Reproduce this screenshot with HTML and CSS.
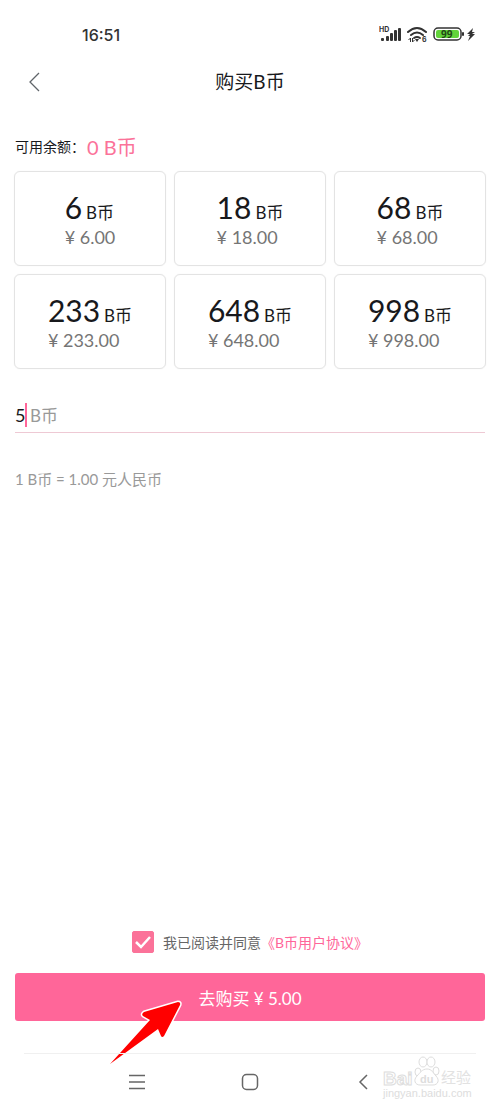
FILE: index.html
```html
<!DOCTYPE html>
<html lang="zh-CN">
<head>
<meta charset="UTF-8" />
<meta name="viewport" content="width=device-width, initial-scale=1" />
<title>购买B币</title>
<link rel="stylesheet" href="styles.css">
</head>
<body>
  <div class="status-bar">
    <span class="time">16:51</span>
    <svg class="status-icons" width="98" height="20" viewBox="0 0 98 20">
      <!-- signal -->
      <text x="0" y="7" class="tiny">HD</text>
      <g fill="#333">
        <rect x="2" y="13" width="3" height="3" rx="1" />
        <rect x="7" y="11" width="3" height="5" rx="1" />
        <rect x="11" y="8" width="3" height="8" rx="1" />
        <rect x="15" y="5" width="3" height="11" rx="1" />
        <rect x="19" y="3" width="3" height="13" rx="1" />
      </g>
      <!-- wifi -->
      <g fill="none" stroke="#333" stroke-width="2" stroke-linecap="round">
        <path d="M29 7Q38 -1 47 7" />
        <path d="M32 10Q38 5 44 10" />
        <path d="M35 13Q38 11 41 13" />
      </g>
      <path d="M36 14h4l-2 3z" fill="#333" />
      <path d="M31.500 17v-4l-2 2M33.500 13v4l2-2" fill="none" stroke="#333" />
      <text x="43" y="17" class="tiny">6</text>
      <!-- battery -->
      <rect x="55" y="3" width="27" height="12" rx="4" fill="#fff" stroke="#333" stroke-width="1.500" />
      <rect x="57" y="5" width="23" height="8" rx="2" fill="#62d43a" />
      <rect x="83" y="7" width="2" height="4" rx="1" fill="#333" />
      <text x="62" y="13" class="level">99</text>
      <path d="M94 3l-6 6h3l-2 2h2l-2 5 7-7h-3l3-2h-3z" fill="#333" />
    </svg>
  </div>

  <header class="header">
    <button type="button" class="back" aria-label="返回">
      <svg width="12" height="20" viewBox="0 0 12 20"><path d="M11 1L2 10l9 9" fill="none" stroke="#60656a" stroke-width="1.300" /></svg>
    </button>
    <h1>购买B币</h1>
  </header>

  <form class="content" id="buyForm">
    <p class="balance">可用余额：<strong>0 B币</strong></p>

    <div class="packages">
      <button type="button" class="package" data-amount="6"><span class="info"><span class="amount"><b>6</b><small>B币</small></span><span class="price">¥ 6.00</span></span></button>
      <button type="button" class="package" data-amount="18"><span class="info"><span class="amount"><b>18</b><small>B币</small></span><span class="price">¥ 18.00</span></span></button>
      <button type="button" class="package" data-amount="68"><span class="info"><span class="amount"><b>68</b><small>B币</small></span><span class="price">¥ 68.00</span></span></button>
      <button type="button" class="package" data-amount="233"><span class="info"><span class="amount"><b>233</b><small>B币</small></span><span class="price">¥ 233.00</span></span></button>
      <button type="button" class="package" data-amount="648"><span class="info"><span class="amount"><b>648</b><small>B币</small></span><span class="price">¥ 648.00</span></span></button>
      <button type="button" class="package" data-amount="998"><span class="info"><span class="amount"><b>998</b><small>B币</small></span><span class="price">¥ 998.00</span></span></button>
    </div>

    <div class="custom">
      <input type="text" id="amount" inputmode="numeric" value="5" aria-label="B币数量" />
      <span class="caret"></span>
      <label for="amount">B币</label>
    </div>
    <p class="rate">1 B币 = 1.00 元人民币</p>

    <div class="bottom">
      <div class="agree">
        <input type="checkbox" id="agree" checked />
        <label for="agree">我已阅读并同意</label><a href="#">《B币用户协议》</a>
      </div>
      <div class="submit-wrap">
        <button type="submit" class="submit">去购买 ¥ <span id="total">5.00</span></button>
        <svg class="arrow" width="74" height="66" viewBox="0 0 74 66">
          <path d="M20 43L41 21l-7-4q-2-2 1-4L69 3q3 0 2 3L55 37q-2 2-3 0l-3-7L31 42" fill="#fff" stroke="#fff" stroke-width="3" stroke-linejoin="round" />
          <path d="M1 65L41 21l-7-4q-2-2 1-4L69 3q3 0 2 3L55 37q-2 2-3 0l-3-7z" fill="#f00" />
        </svg>
      </div>
    </div>
  </form>

  <nav class="nav">
    <div class="nav-keys">
      <button type="button" aria-label="菜单"><svg width="18" height="18" viewBox="0 0 18 18"><path d="M1 2.500h16M1 9h16M1 15.500h16" /></svg></button>
      <button type="button" aria-label="主页"><svg width="18" height="18" viewBox="0 0 18 18"><rect x="1.500" y="1.500" width="15" height="15" rx="4" /></svg></button>
      <button type="button" aria-label="后退"><svg width="18" height="18" viewBox="0 0 18 18"><path d="M13 2L6 9l7 7" /></svg></button>
    </div>
    <svg class="watermark" width="92" height="46" viewBox="0 0 92 46">
      <g class="outline">
        <text x="1" y="29" class="brand">Bai</text>
        <ellipse cx="36" cy="16" rx="3" ry="4" />
        <ellipse cx="41" cy="6" rx="4" ry="5" />
        <ellipse cx="49" cy="6" rx="4" ry="5" />
        <ellipse cx="54" cy="15" rx="3" ry="4" />
        <path d="M45 13c5 0 6 4 9 7 4 4 2 9-3 9H38c-5 0-7-5-3-9 3-3 5-7 10-7z" />
        <text x="59" y="27" class="cn">经验</text>
      </g>
      <text x="38" y="27" class="du">du</text>
      <text x="1" y="41" class="site">jingyan.baidu.com</text>
    </svg>
  </nav>

<script>
  const amountInput = document.getElementById('amount');
  const total = document.getElementById('total');

  function updateTotal() {
    amountInput.style.width = amountInput.value.length > 1 ? amountInput.value.length + 'ch' : '';
    total.textContent = (Number(amountInput.value) || 0).toFixed(2);
  }

  document.querySelectorAll('.package').forEach(btn => {
    btn.addEventListener('click', () => {
      amountInput.value = btn.dataset.amount;
      updateTotal();
    });
  });

  amountInput.addEventListener('input', updateTotal);
  document.getElementById('buyForm').addEventListener('submit', e => e.preventDefault());
</script>
</body>
</html>
```

FILE: styles.css
```css
* {
  box-sizing: border-box;
}
body {
  margin: 0;
  min-height: 100vh;
  display: flex;
  flex-direction: column;
  background: #fff;
  color: #18191c;
  font-family: Lato, "Noto Sans CJK SC", sans-serif;
}
button, input {
  font-family: inherit;
  color: inherit;
  border: none;
  background: none;
  padding: 0;
  margin: 0;
}
button {
  cursor: pointer;
}
p, h1 {
  margin: 0;
}
a {
  color: #ff6699;
  text-decoration: none;
}

/* Status bar */
.status-bar {
  display: flex;
  justify-content: space-between;
  align-items: center;
  height: 58px;
  padding: 12px 23px 0 82px;
}
.time {
  font: 500 16px/24px Inter, sans-serif;
  color: #333;
}
.tiny {
  font: bold 7px Inter, sans-serif;
  fill: #333;
}
.level {
  font: bold 10px "Open Sans", sans-serif;
  fill: #234816;
}

/* Header */
.header {
  position: relative;
  height: 48px;
  display: flex;
  align-items: center;
  justify-content: center;
}
.back {
  position: absolute;
  left: 16px;
  width: 36px;
  height: 36px;
}
.back svg {
  display: block;
  margin: auto;
}
h1 {
  font-size: 19px;
  line-height: 26px;
  font-weight: 400;
}

/* Content */
.content {
  flex: 1;
  display: flex;
  flex-direction: column;
}
.balance {
  display: flex;
  align-items: center;
  gap: 2px;
  height: 24px;
  margin: 28px 15px 13px;
  font-size: 14px;
}
.balance strong {
  font-size: 20px;
  font-weight: 400;
  color: #fb7299;
}
.packages {
  display: grid;
  grid-template-columns: repeat(3, 1fr);
  gap: 8px;
  padding: 0 14px;
}
.package {
  height: 95px;
  border: 1px solid #e3e3e3;
  border-radius: 6px;
  box-shadow: 0 0 1px #e3e3e3;
}
.info {
  display: inline-block;
  text-align: left;
}
.amount {
  display: flex;
  align-items: baseline;
  gap: 4px;
  height: 36px;
  line-height: 36px;
}
.amount b {
  font-size: 30px;
  font-weight: 400;
}
.amount small {
  font-size: 17px;
}
.price {
  display: block;
  font-size: 18px;
  line-height: 24px;
  color: #757575;
}
.custom {
  display: flex;
  align-items: center;
  height: 36px;
  margin: 28px 15px 0;
  border-bottom: 1px solid #eec9d4;
  font-size: 17px;
  color: #999;
}
.custom input {
  width: 10px;
  font-size: 18px;
  color: #18191c;
  outline: none;
}
.caret {
  width: 2px;
  height: 24px;
  margin-right: 3px;
  background: #ff6699;
}
.rate {
  margin: 34px 15px;
  font-size: 15px;
  line-height: 24px;
  color: #999;
}

/* Agreement and submit */
.bottom {
  margin-top: auto;
  padding: 0 15px 32px;
}
.agree {
  display: flex;
  align-items: center;
  justify-content: center;
  height: 22px;
  margin-bottom: 20px;
  font-size: 14px;
  color: #666;
}
.agree input {
  appearance: none;
  width: 22px;
  height: 22px;
  margin-right: 9px;
  border: 1px solid #fb7299;
  border-radius: 2px;
}
.agree input:checked {
  background: #fb7299 url("data:image/svg+xml,%3Csvg xmlns='http://www.w3.org/2000/svg' viewBox='0 0 20 20'%3E%3Cpath d='M3 10l5 5 9-10' fill='none' stroke='white' stroke-width='2.5'/%3E%3C/svg%3E") center / 20px no-repeat;
}
.submit-wrap {
  position: relative;
}
.submit {
  display: block;
  width: 100%;
  height: 48px;
  border-radius: 3px;
  background: #ff6699;
  color: #fff;
  font-size: 17px;
}
.arrow {
  position: absolute;
  left: 94px;
  top: 26px;
  pointer-events: none;
}

/* System navigation */
.nav {
  position: relative;
  height: 58px;
  margin: 0 24px;
  border-top: 1px solid #f0f0f0;
}
.nav-keys {
  display: grid;
  grid-template-columns: repeat(3, 1fr);
  width: 75%;
  height: 56px;
  margin: 0 auto;
}
.nav-keys svg {
  display: block;
  margin: auto;
  fill: none;
  stroke: #666;
  stroke-width: 1.5;
}
.watermark {
  position: absolute;
  right: 2px;
  top: 2px;
  pointer-events: none;
}
.outline {
  fill: #fff;
  stroke: #ddd;
  stroke-width: 1;
}
.brand {
  font: bold 19px "Liberation Sans", sans-serif;
}
.cn {
  font: 15px "Noto Sans CJK SC", sans-serif;
  fill: #e2e2e2;
  stroke: none;
}
.du {
  font: bold 11px "Liberation Sans", sans-serif;
  fill: #ddd;
}
.site {
  font: 11px "Liberation Sans", sans-serif;
  fill: #ddd;
}
```
